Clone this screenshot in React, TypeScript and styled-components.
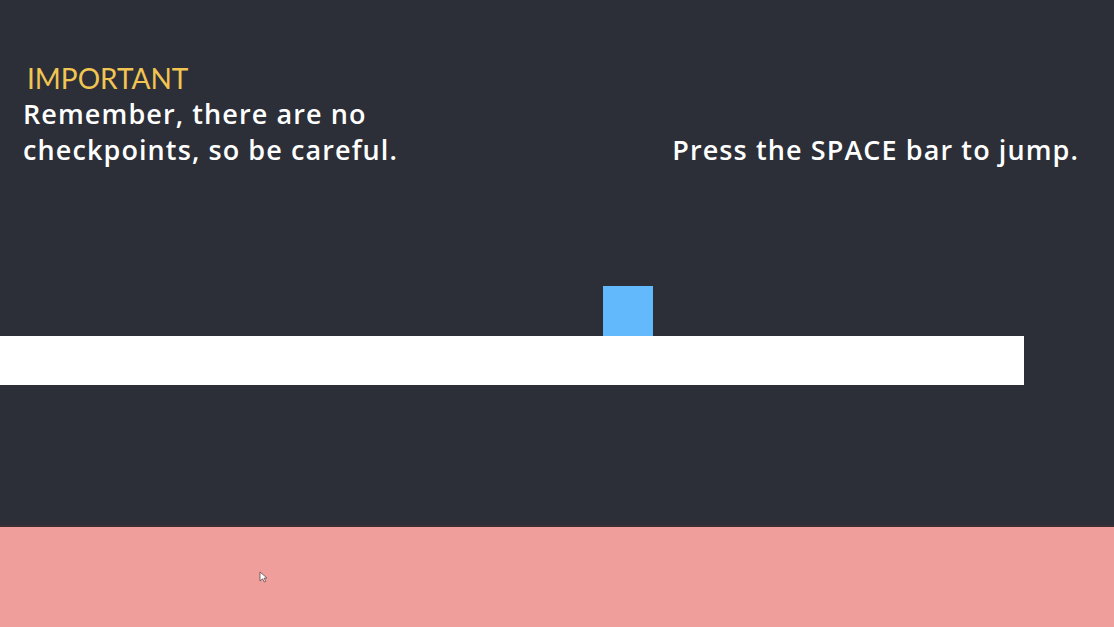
import React, { FC } from 'react';
import styled, { createGlobalStyle } from 'styled-components';

const GlobalStyle = createGlobalStyle`
  html, body {
    margin: 0;
    padding: 0;
    height: 100%;
    overflow: hidden;
  }
  #root {
    height: 100%;
  }
`;

const Screen = styled.div`
  display: flex;
  height: 100vh;
  flex-direction: column;
  background: #2c2f38;
  font-family: 'Open Sans', 'Lato', sans-serif;
  color: #ffffff;
`;

const Hud = styled.div`
  display: flex;
  padding: 60px 35px 0 23px;
  justify-content: space-between;
  align-items: flex-end;
`;

const Notice = styled.div`
  display: flex;
  flex-direction: column;
`;

const Label = styled.span`
  padding-left: 4px;
  color: #f2c552;
  font-family: 'Lato', sans-serif;
  font-size: 28px;
  line-height: 36px;
`;

const Line = styled.span`
  font-size: 27px;
  line-height: 36px;
  font-weight: 600;
  letter-spacing: 1.1px;
`;

const Stage = styled.div`
  display: flex;
  padding-top: 118px;
  flex-direction: column;
`;

const Player = styled.div`
  width: 50px;
  height: 50px;
  margin-left: 603px;
  background: #62b9fb;
`;

const Platform = styled.div`
  width: 1024px;
  height: 49px;
  background: #ffffff;
`;

const Ground = styled.div`
  position: relative;
  margin-top: auto;
  height: 100px;
  border-top: 2px solid #3a2f34;
  background: #ef9e9b;
`;

const Cursor = styled.svg`
  position: absolute;
  top: 44px;
  left: 259px;
`;

const App: FC = () => (
  <>
    <GlobalStyle />
    <Screen>
      <Hud>
        <Notice>
          <Label>IMPORTANT</Label>
          <Line>Remember, there are no</Line>
          <Line>checkpoints, so be careful.</Line>
        </Notice>
        <Line>Press the SPACE bar to jump.</Line>
      </Hud>
      <Stage>
        <Player />
        <Platform />
      </Stage>
      <Ground>
        <Cursor width="9" height="12" viewBox="0 0 9 12">
          <path d="M1 1 L1 10 L3.5 7.8 L5.5 11 L6.8 10.3 L5 7.2 L8 7 Z" fill="#fff" stroke="#5a4a4c" strokeWidth="0.8" />
        </Cursor>
      </Ground>
    </Screen>
  </>
);

export default App;
